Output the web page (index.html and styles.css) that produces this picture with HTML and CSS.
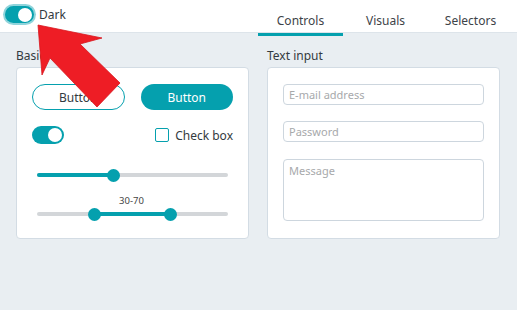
FILE: index.html
```html
<!DOCTYPE html>
<html>
<head>
<meta charset="utf-8">
<link rel="stylesheet" href="styles.css">
</head>
<body>
<header class="topbar">
  <div class="theme">
    <span class="switch switch-big"><span class="knob"></span></span>
    <span class="theme-label">Dark</span>
  </div>
  <nav class="tabs">
    <span class="tab active">Controls</span>
    <span class="tab">Visuals</span>
    <span class="tab">Selectors</span>
  </nav>
</header>
<main class="main">
  <section class="col">
    <h2 class="title">Basic</h2>
    <div class="card">
      <div class="btn-row">
        <button class="btn btn-outline">Button</button>
        <button class="btn btn-fill">Button</button>
      </div>
      <div class="row2">
        <span class="switch switch-small"><span class="knob"></span></span>
        <label class="check"><span class="box"></span><span>Check box</span></label>
      </div>
      <div class="slider s1">
        <div class="track"><div class="fill" style="left:0;width:40%"></div><span class="thumb" style="left:40%"></span></div>
      </div>
      <div class="range-label">30-70</div>
      <div class="slider s2">
        <div class="track"><div class="fill" style="left:30%;width:40%"></div><span class="thumb" style="left:30%"></span><span class="thumb" style="left:70%"></span></div>
      </div>
    </div>
  </section>
  <section class="col">
    <h2 class="title">Text input</h2>
    <div class="card card-form">
      <input class="field" type="text" placeholder="E-mail address">
      <input class="field" type="password" placeholder="Password">
      <textarea class="field area" placeholder="Message"></textarea>
    </div>
  </section>
</main>
<svg class="arrow" width="130" height="115" viewBox="0 0 130 115">
  <polygon points="38,25 102,38 80,44 120,83 97,107 50,58 42,75" fill="#ee1d25" stroke="#d8161e" stroke-width="0.8" stroke-linejoin="miter"/>
</svg>
</body>
</html>
```
FILE: styles.css
```css
* { box-sizing: border-box; }
html, body { margin: 0; padding: 0; }
body {
  background: #e9eef2;
  font-family: "Noto Sans", "Liberation Sans", sans-serif;
  color: #333a40;
  width: 517px;
  height: 310px;
  overflow: hidden;
  position: relative;
}
.topbar {
  height: 33px;
  background: #fff;
  border-bottom: 1px solid #dde4ea;
  display: flex;
  justify-content: space-between;
  align-items: stretch;
  padding: 0 4px 0 5px;
}
.theme {
  display: flex;
  align-items: center;
  gap: 5px;
  padding-bottom: 6px;
  padding-top: 3px;
}
.switch {
  display: inline-flex;
  align-items: center;
  justify-content: flex-end;
  background: #05a0ae;
  border-radius: 12px;
}
.switch-big {
  width: 29px;
  height: 17px;
  padding: 2px;
  box-shadow: 0 0 0 2px #8fd4db;
}
.switch-big .knob { width: 14px; height: 14px; }
.switch-small {
  width: 32px;
  height: 18px;
  padding: 2px;
}
.switch-small .knob { width: 14px; height: 14px; }
.knob {
  display: block;
  background: #fff;
  border-radius: 50%;
}
.theme-label {
  font-size: 12px;
  color: #333a40;
}
.tabs {
  display: flex;
}
.tab {
  width: 85px;
  display: flex;
  align-items: center;
  justify-content: center;
  font-size: 12px;
  color: #3d4348;
  position: relative;
  padding-top: 8px;
}
.tab.active::after {
  content: "";
  position: absolute;
  left: 0;
  right: 0;
  bottom: -4px;
  height: 3px;
  background: #05a0ae;
}
.main {
  display: flex;
  gap: 18px;
  padding: 15px 17px 0 16px;
}
.col { width: 233px; }
.title {
  margin: 0 0 3px 0;
  font-size: 12px;
  font-weight: normal;
  line-height: 16px;
  color: #333a40;
}
.card {
  background: #fff;
  border: 1px solid #d3dce4;
  border-radius: 4px;
  height: 172px;
  padding: 16px 15px 17px 15px;
}
.btn-row {
  display: flex;
  gap: 16px;
}
.btn {
  width: 93px;
  height: 26px;
  border-radius: 13px;
  font-family: inherit;
  font-size: 12px;
  padding: 0;
}
.btn-outline {
  background: #fff;
  border: 1.5px solid #05a0ae;
  color: #333a40;
}
.btn-fill {
  background: #05a0ae;
  border: none;
  color: #fff;
}
.row2 {
  margin-top: 16px;
  height: 18px;
  display: flex;
  justify-content: space-between;
  align-items: center;
}
.check {
  display: flex;
  align-items: center;
  gap: 6px;
  font-size: 12px;
  color: #333a40;
}
.box {
  width: 14px;
  height: 14px;
  border: 1.5px solid #05a0ae;
  border-radius: 2px;
}
.slider {
  height: 14px;
  padding: 0 5px;
  display: flex;
  align-items: center;
}
.s1 { margin-top: 24px; }
.range-label {
  margin-top: 13px;
  height: 12px;
  line-height: 12px;
  font-size: 9.5px;
  text-align: center;
  padding-right: 2px;
  color: #444;
}
.track {
  position: relative;
  width: 100%;
  height: 4px;
  border-radius: 2px;
  background: #d3d6d9;
}
.fill {
  position: absolute;
  top: 0;
  height: 4px;
  border-radius: 2px;
  background: #05a0ae;
}
.thumb {
  position: absolute;
  top: 50%;
  width: 13px;
  height: 13px;
  margin: -6.5px 0 0 -6.5px;
  border-radius: 50%;
  background: #05a0ae;
}
.card-form {
  display: flex;
  flex-direction: column;
}
.field {
  width: 201px;
  height: 21px;
  border: 1px solid #cdd6de;
  border-radius: 4px;
  font-family: inherit;
  font-size: 11px;
  padding: 0 5px;
  color: #333;
  outline: none;
  margin: 0 0 16px 0;
}
.field:nth-child(2) { margin-bottom: 17px; }
.field::placeholder { color: #a7a9ab; }
.area {
  height: 62px;
  resize: none;
  padding: 3px 5px;
  margin: 0;
}
.arrow {
  position: absolute;
  left: 0;
  top: 0;
}
```
